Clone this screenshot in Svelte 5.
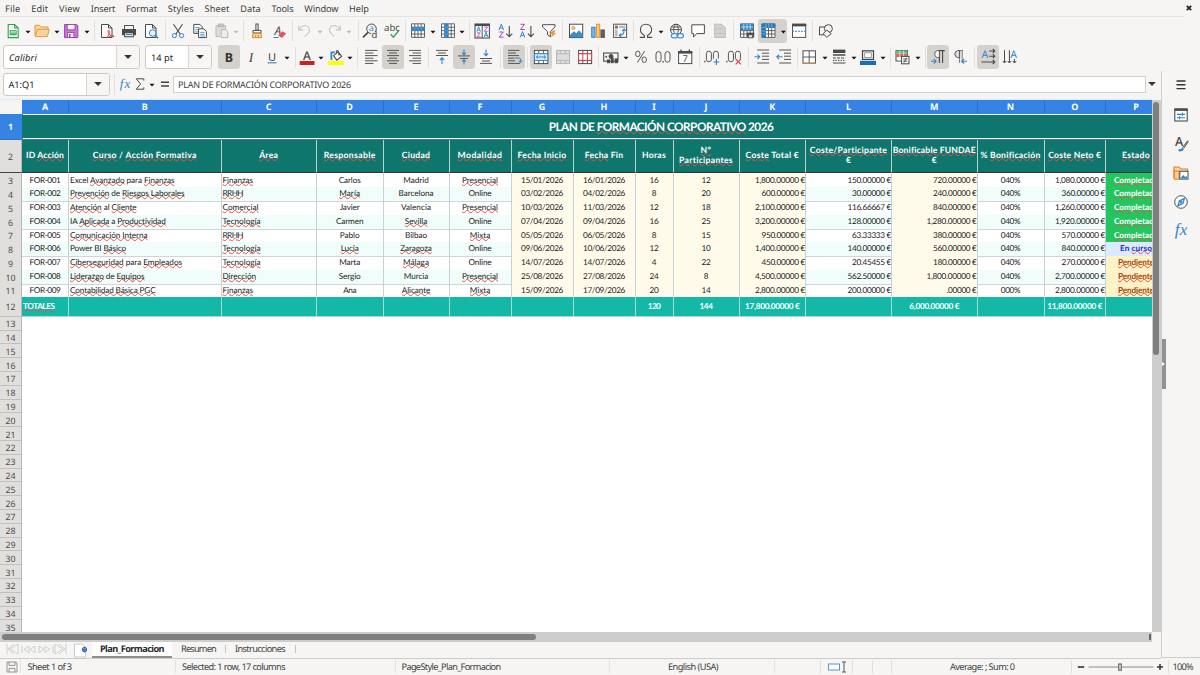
<script>
  const menus = [['File', 15.5], ['Edit', 17], ['View', 21], ['Insert', 24.5], ['Format', 31], ['Styles', 26], ['Sheet', 25], ['Data', 20.5], ['Tools', 22], ['Window', 34], ['Help', 20]];

  const K = '#4b4b4b';
  const B = '#2d87cc';
  const path = (d, c = K, w = 1, f = 'none') => `<path d="${d}" stroke="${c}" stroke-width="${w}" fill="${f}"/>`;
  const rect = (x, y, w, h, f = 'none', s = 'none', sw = 1) => `<rect x="${x}" y="${y}" width="${w}" height="${h}" fill="${f}" stroke="${s}" stroke-width="${sw}"/>`;
  const txt = (x, y, s, size, c = K, extra = '') => `<text x="${x}" y="${y}" font-size="${size}" fill="${c}" font-family="Noto Sans, sans-serif" text-anchor="middle" ${extra}>${s}</text>`;
  const circ = (x, y, r, s = K, f = 'none') => `<circle cx="${x}" cy="${y}" r="${r}" stroke="${s}" fill="${f}"/>`;
  const lines = (y0, y1, step, x, w) => Array.from({ length: Math.round((y1 - y0) / step) + 1 }, (_, i) => `M${x(i)} ${y0 + i * step}h${w(i)}`).join('');
  const page = (c = K, f = '#fdfdfd') => path('M-5.5 -6.5h7l3.5 3.5v9.5h-10.5z M1.5 -6.5v3.5h3.5', c, 1, f);
  const tableGrid = path('M-6.5 -7.2h13v13.6h-13z M-6.5 -3.8h13 M-6.5 -.4h13 M-6.5 3h13 M-3.2 -7v13.4 M0 -7v13.4 M3.2 -7v13.4', '#555', 0.9, '#fff');
  const flow = (d) => path(d, '#555', 1);
  const zeros = (x) => `<rect x="${x}" y="-5.8" width="5" height="10.6" rx="2.5" fill="none" stroke="#555"/><rect x="${x + 7}" y="-5.8" width="5" height="10.6" rx="2.5" fill="none" stroke="#555"/>`;

  const icons = {
    new: path('M-4.8 -6.5h6.5l3.5 3.5v9.6h-10z M1.7 -6.5v3.5h3.5', '#2fa152', 1.1, '#f4fbf5') + rect(-3.3, -1, 7, 5.3, '#43ad60') + path('M-2.5 .3h5.4 M-2.5 1.8h5.4', '#fff', 0.7),
    open: path('M-7 5v-10.7h4.6l1.6 1.7h6.8v3', '#e39a45', 1, '#fbd29a') + path('M-6.6 5.6l2-7.3h11.8l-1.8 7.3z', '#e39a45', 1, '#fbd29a'),
    save: path('M-6.4 -6.5h12l1.2 1.2v11.9h-13.2z', '#9b3fb0', 1, '#c47ad2') + rect(-3.8, -6.4, 7.8, 5.2, '#fff', '#9b3fb0', 0.9) + rect(-3.6, 1.5, 6.5, 5, '#f2f0f2', '#9b3fb0', 0.8) + rect(-2, 2.8, 1.5, 3.4, '#9b3fb0'),
    pdf: page() + path('M-.5 6.5c3-3 3.5-6 2.6-7s-1.5 1-.3 3 3.3 3.2 5.2 3c1-.6-3-1.4-7 1.3', '#e0384a', 1),
    print: rect(-4.5, -5.5, 9, 4, '#e8f3fa', '#555', 1) + rect(-7, -2, 14, 6.2, '#4b4b4b') + rect(-4.3, 1.8, 8.6, 4, '#fff', '#3a3a3a', 1) + path('M-3 3.6h6', B, 1.2),
    preview: page() + circ(1.7, 2, 3.3, B, '#e4f2fb') + path('M4 4.4l3 2.8', B, 1.6),
    cut: path('M-4.5 -6.8l6.8 10 M4.5 -6.8l-6.8 10', K, 1.1) + circ(-3.6, 4.6, 2.1, B) + circ(3.6, 4.6, 2.1, B),
    copy: path('M-6.2 -6.6h6l2.4 2.4v6.6h-8.4z', K, 1, '#fff') + path('M-4.7 -3.5h4 M-4.7 -1.3h4 M-4.7 .9h4', B, 0.8) + path('M-1.4 -2.2h5.2l2.6 2.6v6.2h-7.8z', K, 1, '#fff') + path('M.2 1.4h4.4 M.2 3.3h4.4 M.2 5h4.4', B, 0.8),
    paste: path('M-2 5.6h-4v-11h9.6v4', '#b9b9b9', 1, '#dcdcdc') + rect(-3.6, -7, 4.8, 2.6, '#ccc', '#aaa', 0.8) + path('M-.8 -1.4h4.2l2.4 2.4v5.6h-6.6z', '#b5b5b5', 1, '#eee'),
    brush: rect(-1.1, -7, 2.2, 6.3, '#fff', K, 1) + path('M-4 -.6h8v2.6h-8z', K, 1, '#fff') + path('M-4 2.4h8l.5 4.2h-9z', '#d98c2e', 1, '#fbd29a') + path('M-1.5 4v2.3 M1.3 4v2.3', '#d98c2e', 0.8),
    clear: txt(-1.2, 3.6, 'A', 12, K, 'font-style="italic"') + path('M-5.5 6.5h5', B, 1) + '<path d="M-.8 4.6l4.2-4.4 3.7 2.4-4.2 4.4z" fill="#e8505b"/>',
    undo: path('M-6.3 -5.5v4.4h4.4 M-6 -1.4c2-4.4 7-5.2 9.3-2.6 2.4 2.8 1.6 5-3.6 9.6', '#c4c4c4', 1.1),
    redo: path('M6.3 -5.5v4.4h-4.4 M6 -1.4c-2-4.4-7-5.2-9.3-2.6-2.4 2.8-1.6 5 3.6 9.6', '#c4c4c4', 1.1),
    find: circ(1.5, -2.2, 4.8) + path('M-2 1.4l-5 5', K, 1.8) + txt(1.5, 0.4, 'a', 8.5, B) + '<circle cx="4.2" cy="4.4" r="3.4" fill="#f6f5f4"/>' + txt(4.4, 6.8, 'd', 9.5),
    abc: txt(0, 0.4, 'abc', 9.6, K) + path('M-1.3 3.2l2.7 3 5.2-6.4', '#35a35b', 1.4),
    row: tableGrid + rect(-6.8, -3.9, 13.6, 3.6, '#2d87cc') + path('M-3.2 -3.8v3.4M0 -3.8v3.4M3.2 -3.8v3.4', '#80bce6', 0.5),
    col: tableGrid + rect(-3.3, -7.4, 3.6, 14, '#2d87cc') + path('M-3.2 -3.8h3.4M-3.2 -.4h3.4M-3.2 3h3.4', '#80bce6', 0.5),
    sort: rect(-7, -7, 14.4, 14, '#fff', K, 1.1) + path('M-7 -6h14.4', K, 2) + path('M.2 -5v12', K, 1) + path('M-5.2 .6l1.8-5 1.8 5M-4.6 -1h2.4M2.3 6l1.8-5 1.8 5M2.9 4.4h2.4', B, 0.9) + path('M-5 1.9h3.2l-3.2 4h3.4M2.3 -4h3.2l-3.2 4.3h3.4', '#a848bd', 0.9),
    az: path('M-6 -1l2.3-5.8 2.3 5.8M-5.2 -3h3', B, 1) + path('M-5.7 1h4l-4 5.2h4.3', '#a848bd', 1) + path('M4.3 -5v10.5 M1.3 2.6l3 3 3-3', K, 1.1),
    za: path('M-6.5 -6.7h4l-4 5.2h4.3', '#a848bd', 1) + path('M-6.8 6.4l2.3-5.8 2.3 5.8M-6 4.4h3', B, 1) + path('M3.9 -5v10.5 M.9 2.6l3 3 3-3', K, 1.1),
    filter: path('M-6.4 -6.3h12.4v2.2l-4.7 4.6v5.2l-2.8-2v-3.2l-4.9-4.6z', K, 1, '#fff') + '<path d="M3 0l3.8-1-1.8 3h2.3l-6 5 1.8-3.8h-2.2z" fill="#f0983a"/>',
    image: rect(-6.5, -6.8, 13.2, 13.4, '#fff', K, 1) + circ(-2.6, -3, 1.5, '#e8912e', '#fbd29a') + '<path d="M-6 6.2v-2.5l4-3.4 2.3 2 2.7-3 3.4 3.6v3.3z" fill="#3c8fcb"/>',
    chart: rect(-6.3, -3.7, 3.3, 10, '#7db9e4', B) + rect(-1.6, -6.8, 3.3, 13.1, '#fbc680', '#e8912e') + rect(3, -1, 3.3, 7.3, '#666', K),
    pivot: rect(-6.4, -6.8, 13, 13.2, '#fff', '#555', 1) + rect(-5, -5.4, 3, 3, '#777') + rect(-1, -5.4, 6.4, 2.6, '#bbb') + rect(-5, -1.4, 2.6, 6.6, '#bbb') + path('M-.5 4.3c4 0 4.6-2.4 4.6-5.4 M2 0l2.2-2 1.8 2 M1.3 2.4l-2 2 2 1.6', B, 1.1),
    omega: path('M-6.2 6.4h4.6v-2c-3-1.6-4-3.6-4-5.6 0-3.4 2.4-5.6 5.6-5.6s5.6 2.2 5.6 5.6c0 2-1 4-4 5.6v2h4.6', K, 1.1),
    link: circ(0, -1.4, 5.4) + path('M-5.4 -1.4h10.8 M-4.6 -4h9.2 M0 -6.8c-3.2 3-3.2 7.8 0 10.8 M0 -6.8c3.2 3 3.2 7.8 0 10.8', K, 0.9) + '<rect x="-4.6" y="2.6" width="6.4" height="4.2" rx="2.1" fill="#f6f5f4" stroke="#3b93d3" stroke-width="1.2"/><rect x="1" y="2.6" width="6.4" height="4.2" rx="2.1" fill="none" stroke="#3b93d3" stroke-width="1.2"/>',
    comment: path('M-6.2 -6.2h12.6v8.8h-7.8l-3 3.4v-3.4h-1.8z', K, 1, '#fff'),
    headfoot: path('M-5.3 -6.8h7l3.6 3.6v9.6h-10.6z', '#bbb', 1, '#d2d2d2') + path('M-3.5 -2.4h6 M-3.5 2.6h7', '#bdbdbd', 1),
    printrange: tableGrid + rect(-6.4, -7, 12.8, 6, '#2d87cc') + path('M-6 -4h12 M-3.2 -7v6M0 -7v6M3.2 -7v6', '#dff0fa', 0.7) + rect(-0.2, 1.6, 7.4, 4.2, '#4b4b4b') + rect(1.3, 3.7, 4.4, 3.2, '#cfe4f2', '#4b4b4b', 0.8),
    freeze: '<g transform="translate(-4 0)">' + tableGrid + rect(-6.8, -7.2, 4.2, 14, '#2278bd') + rect(-6.8, -7.2, 13.4, 4, '#2278bd') + path('M-6 -3.5h3 M-6 0h3M-6 3h3 M-2.6 -7v3.6M.4 -7v3.6M3.3 -7v3.6', '#9ccbe9', 0.7) + '</g><path d="M8.4 -.3h5l-2.5 2.8z" fill="#111"/>',
    split: rect(-6.5, -6.8, 13.2, 13.2, '#fff', '#555', 1) + rect(-7, -7.2, 14.2, 2.6, K) + path('M-7 .2h14', B, 1.1).replace('/>', ' stroke-dasharray="2 1"/>'),
    shapes: rect(-6.5, -4, 8, 7.8, '#f6f5f4', K) + circ(2.4, -2.4, 4, K, '#f6f5f4') + path('M.8 -.9l4.4 3.6-4.4 3.6-3.7-3.6z', K, 1, '#f6f5f4'),
    bold: txt(0, 4.8, 'B', 12.5, '#333', 'font-weight="700"'),
    italic: '<text x="0" y="4.6" font-size="13.5" fill="#444" font-family="Liberation Serif, serif" font-style="italic" text-anchor="middle">I</text>',
    under: txt(0, 3.6, 'U', 11, '#444') + path('M-4.5 5.8h9', B, 1.1),
    fontcolor: txt(0, 2.8, 'A', 12, '#444', 'font-weight="500"') + rect(-7.3, 4, 14.8, 4, '#c9211e'),
    fill: path('M-4.6 3v-7.6h3.4', B, 1.8) + path('M-2.4 -1.4l4.6-3.7 3.4 4.5-4.8 3.8z M.4 -4.4c-.6-2.8 2-2.8 2.4 0v2.6', K, 1.1, '#fff') + rect(-8, 4, 16, 4, '#ffff00'),
    left: flow(lines(-6.6, 6.4, 2.6, () => -6, (i) => (i % 2 ? 8.5 : 12.5))),
    center: flow(lines(-6.6, 6.4, 2.6, (i) => (i % 2 ? -4 : -6), (i) => (i % 2 ? 8 : 12))),
    right: flow(lines(-6.6, 6.4, 2.6, (i) => (i % 2 ? -2.5 : -6), (i) => (i % 2 ? 8.5 : 12))),
    top: flow('M-6 -6.6h12 M-4 -4h8 M-6 -1.5h12') + path('M0 7v-6 M-2.2 3l2.2-2.2 2.2 2.2', B, 1.1),
    middle: flow('M-6 -1.1h12 M-4 1.4h8') + path('M0 -7.5v5 M-2 -4.4l2 2 2-2 M0 7.5v-5 M-2 4.6l2-2 2 2', B, 1.1),
    bottom: flow('M-6 1.5h12 M-4 4h8 M-6 6.4h12') + path('M0 -7.5v6 M-2.2 -3.6l2.2 2.2 2.2-2.2', B, 1.1),
    wrap: flow('M-6 -6.6h11.5 M-6 -4h8 M-6 -1.4h11 M-6 1.2h6.5 M-6 3.8h7 M-6 6.4h12') + path('M1 1h4q1.6 0 1.6 2v1.8 M4.6 3.6l2 2 1.6-2', B, 1),
    merge: rect(-6.6, -6.6, 13.4, 13.2, '#fff', K) + path('M-6.6 -3.2h13.4 M-6.6 3.4h13.4 M-2.2 -6.6v3.4 M2.4 -6.6v3.4 M-2.2 3.4v3.2 M2.4 3.4v3.2', K, 0.9) + rect(-6.6, -3.2, 13.4, 6.6, '#d7ebf8', B, 0.9) + path('M-4.5 0h9 M-3 -1.6l-1.7 1.6 1.7 1.6 M3 -1.6l1.7 1.6-1.7 1.6', B, 1),
    mergegrey: rect(-6.4, -6.6, 13, 13.2, '#ddd', '#b4b4b4') + path('M-6.4 -3.2h13 M-6.4 3.4h13 M-2.2 -6.6v3.4 M2.4 -6.6v3.4 M-2.2 3.4v3.2 M2.4 3.4v3.2', '#b4b4b4', 0.9),
    unmerge: rect(-6.4, -6.6, 13, 13.2, '#fff', K) + path('M-6.4 -3.2h13 M-6.4 3.6h13 M-2.2 -6.6v13 M2.4 -6.6v13', K, 0.9) + rect(-6.4, -3.2, 13, 6.6, '#fff', '#de3b44', 1) + path('M-2.2 -3v6.4 M2.4 -3v6.4', '#de3b44', 1),
    currency: rect(-7.3, -4, 14.3, 8.2, '#f6f5f4', K, 1.1) + circ(0, -0.6, 2, K, K) + '<g fill="#4b4b4b"><circle cx="-4.8" cy="-.2" r="1"/><rect x="-4" y="2.4" width="3" height="3.8"/><rect x="-.3" y=".8" width="3" height="5.4"/><rect x="3.6" y="1.4" width="3.4" height="4.8"/></g>',
    percent: path('M3.6 -6l-7.2 11.6', '#555', 1) + '<rect x="-5.3" y="-5.8" width="4.2" height="5.4" rx="2" fill="none" stroke="#555"/><rect x="1.1" y="0" width="4.2" height="5.4" rx="2" fill="none" stroke="#555"/>',
    number: '<rect x="-7" y="-5.4" width="5" height="10.6" rx="2.5" fill="none" stroke="#555"/><rect x="2" y="-5.4" width="5" height="10.6" rx="2.5" fill="none" stroke="#555"/>' + rect(-0.6, 4, 1.3, 1.6, '#555'),
    date: rect(-6.4, -5.4, 13.2, 12, '#fff', K, 1) + rect(-6.8, -6, 14, 2.6, K) + path('M-4 -7.5v2 M4.3 -7.5v2', K, 1.3) + txt(0.2, 5.2, '7', 9.5, K),
    adddec: zeros(-5.6) + rect(-7.8, 3.8, 1.3, 1.6, '#555') + rect(1, 1.6, 7, 6, '#f6f5f4') + path('M1.4 5h6 M4.4 2v6', B, 1.2),
    deldec: zeros(-5.6) + rect(-7.8, 3.8, 1.3, 1.6, '#555') + rect(1, 1.6, 7, 6, '#f6f5f4') + path('M1.6 1.9l5.4 5.4 M7 1.9l-5.4 5.4', '#e0384a', 1.2),
    indent: flow('M-4.8 -7h12 M0 -3.8h7 M0 -.8h7 M0 2.4h7 M-4.8 6h12') + path('M-7.5 -.2h5 M-4.5 -2.4l2.2 2.2-2.2 2.2', B, 1.1),
    outdent: flow('M-4.8 -7h12 M0 -3.8h7 M0 -.8h7 M0 2.4h7 M-4.8 6h12') + path('M-7.5 -.2h6 M-5 -2.4l-2.2 2.2 2.2 2.2', B, 1.1),
    borders: rect(-6, -6.2, 12.4, 12.4, '#fff', K, 1) + path('M.2 -6v12 M-6 0h12.4', K, 0.9) + path('M-6.3 6.2h13', '#e8912e', 0.8),
    linestyle: rect(-6, -7.4, 12.4, 3.4, K) + path('M-6 -2h12.4', K, 1.5) + path('M-6 1h12.4', K, 1.1).replace('/>', ' stroke-dasharray="3 1"/>') + path('M-6 3.4h12.4', K, 1).replace('/>', ' stroke-dasharray="1.5 1"/>') + path('M-6 6h12.4', K, 1),
    linecolor: rect(-5.5, -6.2, 11, 8.6, '#e8f3fa', '#444', 1.2) + rect(-3.3, -4.2, 6.6, 4.6, '#fff', '#777', 0.7) + rect(-8, 3.8, 16, 4.2, '#1b6cb0'),
    cond: rect(-6, -6.5, 11.5, 10.5, '#fff', K, 1) + rect(-6, -6.5, 11.5, 3.2, '#5fc27c') + rect(-6, -3.2, 11.5, 3.2, '#e8655c') + path('M-2.2 -6.5v10.5 M1.6 -6.5v10.5', '#fff', 0.6) + rect(-0.4, -0.6, 7.4, 7.4, '#fff', K, 1) + path('M1.2 2h4.2M1.2 4.2h4.2M4.6 .6l-2.6 5', K, 0.9),
    ltr: path('M4.6 6v-12.2 M1.4 6v-12.2 M-.2 -6.4h7', K, 1.1) + '<path d="M1.4 -6.4h-2a3.6 3.6 0 0 0 0 7h2z" fill="#fff" stroke="#4b4b4b" stroke-width=".9"/>' + path('M-7 4.2h5 M-4.2 1.8l2.3 2.4-2.3 2.4', B, 1.1),
    rtl: path('M2.2 6v-12.2 M-.4 6v-12.2 M-2 -6.4h5', '#777', 1) + '<path d="M-.4 -6.4h-2a3.6 3.6 0 0 0 0 7h2z" fill="#ddd" stroke="#4b4b4b" stroke-width=".9"/>' + path('M7 4.2h-5 M4.2 1.8l-2.3 2.4 2.3 2.4', B, 1.1),
    texth: txt(-3.2, 1, 'A', 10.5, B) + path('M1.2 -6h5.5 M4.8 -8l2 2-2 2 M1.2 -.8h5.5 M4.8 -2.8l2 2-2 2 M-6.5 5h13.2 M4.8 3l2 2-2 2', K, 1.1),
    textv: txt(3.6, 1, 'A', 10.5, B) + path('M-5.5 -6.8v12.6 M-7.2 4l1.7 2 1.7-2 M-.6 -6.8v12.6 M-2.3 4l1.7 2 1.7-2 M4.4 2v4 M2.8 4l1.7 2 1.7-2', K, 1),
    fx: '<text x="0" y="3.8" font-size="13" fill="#2d87cc" font-family="Liberation Serif, serif" font-style="italic" text-anchor="middle" textLength="10.5">fx</text>',
    fxbig: '<text x="0" y="4.4" font-size="17" fill="#2d87cc" font-family="Liberation Serif, serif" font-style="italic" text-anchor="middle" textLength="12.5">fx</text>',
    sigma: path('M3.8 -3.4v-1.8h-7.6l4.4 5.2-4.4 5.2h7.6v-1.8', K, 1),
    equals: path('M-4 -1.7h8 M-4 2h8', '#444', 1.5),
    hamburger: path('M-4.5 -4h9 M-4.5 -.2h9 M-4.5 3.6h9', '#333', 1.4),
    props: rect(-6.2, -6, 12.4, 12, '#fff', K, 1.1) + rect(-6.5, -6.5, 13, 2.4, K) + path('M-4 -.6h8 M-4 2.8h8 M1.4 -2.2v3 M-1.4 1.3v3', B, 1.1),
    stylesicon: txt(-1.8, 2, 'A', 12.5, '#444', 'font-weight="500"') + path('M6.8 -3.5l-5.2 7.2 M7.4 -2.6l-4.6 6.8', K, 1) + path('M-2.4 5.8q3 1.4 4.6-1.4', B, 2.2),
    gallery: path('M-7 5v-11h5l1.6 2h6.8v3', '#e07f24', 1.2, '#fbd9ae') + rect(-6.8, -2, 5, 8.2, '#fbc98c', '#e07f24') + rect(-1.2, -1.7, 8.2, 7.8, '#fff', K, 1) + '<path d="M-.8 5.6l3-3.6 2 2 1.2-1 1.2 2.6z" fill="#2d87cc"/>',
    compass: circ(0, 0, 6.3, '#555', '#fbfbfb') + path('M3.4 -3.6l-1.4 5-5.2 2.6 1.5-5z', B, 1.2, '#bcdcf2') + circ(0, 0, 0.8, B, B),
    saved: path('M-5 -5h9l1 1v9h-10z M-3 -5v3.4h6v-3.4 M-3 5v-3.6h6v3.6', '#8c8c8c', 0.9),
    selmode: rect(-5.5, -3, 11, 6, '#fff', '#4b9bd0', 1),
    ibeam: path('M-2 -5h4 M0 -5v10 M-2 5h4', '#555', 1),
    minus: path('M-3.2 0h6.4', '#333', 1.6),
    plus: path('M-3 0h6 M0 -3v6', '#333', 1.5),
    slider: path('M-32.5 0h65', '#8d8d8d', 1) + rect(-2.2, -3, 2.4, 6.2, '#f6f5f4', '#4a4a4a', 1),
    arrow: '<path d="M-2.5 -.3h5l-2.5 2.8z" fill="#111"/>',
    arrowoff: '<path d="M-2.5 -.3h5l-2.5 2.8z" fill="#bbb"/>',
    arrowbig: '<path d="M-3.8 -2h7.6l-3.8 4z" fill="#333"/>'
  };

  const place = (list, start = 0) => {
    let end = start;
    return list.map(([name, cx, opt]) => {
      const w = name === 'sep' ? 1 : name.startsWith('arrow') ? 8 : name === 'freeze' ? 29 : name === 'slider' ? 66 : opt === 'on' ? 22 : name === 'ibeam' || name === 'minus' || name === 'plus' ? 8 : 16;
      const gap = cx - w / 2 - end;
      end = cx + w / 2;
      return { name, w, gap, on: opt === 'on' || name === 'freeze' };
    });
  };

  const bar1 = place([['new', 12.5], ['arrow', 27.5], ['open', 42], ['arrow', 57], ['save', 71], ['arrow', 86.5], ['sep', 94], ['pdf', 107], ['print', 129], ['preview', 151], ['sep', 165], ['cut', 178], ['copy', 200], ['paste', 222], ['arrowoff', 236], ['sep', 243], ['brush', 256.5], ['clear', 278.5], ['sep', 292], ['undo', 305], ['arrowoff', 319.5], ['redo', 334], ['arrowoff', 349], ['sep', 358], ['find', 370], ['abc', 391.5], ['sep', 405], ['row', 418], ['arrow', 432.5], ['col', 447.5], ['arrow', 462], ['sep', 469.5], ['sort', 482], ['az', 504.5], ['za', 527], ['filter', 549], ['sep', 562.5], ['image', 576], ['chart', 598], ['pivot', 619.5], ['sep', 633.5], ['omega', 645.5], ['arrow', 660.5], ['link', 676], ['comment', 698], ['headfoot', 720], ['sep', 733.5], ['printrange', 747], ['freeze', 772.5], ['split', 798.5], ['sep', 812.5], ['shapes', 826]]);
  const bar2 = place([['bold', 228.5, 'on'], ['italic', 251], ['under', 272], ['arrow', 287], ['sep', 295], ['fontcolor', 306.8], ['arrow', 321.5], ['fill', 336], ['arrow', 350.5], ['sep', 358], ['left', 371.5], ['center', 393.5, 'on'], ['right', 415.5], ['sep', 429], ['top', 442.5], ['middle', 464.5, 'on'], ['bottom', 486.5], ['sep', 500.5], ['wrap', 514, 'on'], ['sep', 527.5], ['merge', 541, 'on'], ['mergegrey', 563], ['unmerge', 585], ['sep', 599], ['currency', 611], ['arrow', 626], ['percent', 641.5], ['number', 663.5], ['date', 685.3], ['sep', 699.5], ['adddec', 712.5], ['deldec', 734.5], ['sep', 748.5], ['indent', 762.5], ['outdent', 784], ['sep', 797.5], ['borders', 809.5], ['arrow', 825], ['linestyle', 839], ['arrow', 854], ['linecolor', 868.5], ['arrow', 883.5], ['sep', 891], ['cond', 902.5], ['arrow', 918], ['sep', 926], ['ltr', 938.5, 'on'], ['rtl', 960.5], ['sep', 974.5], ['texth', 988, 'on'], ['textv', 1010]], 212);
  const bar3 = place([['sep', 114], ['fx', 124.5], ['sigma', 140], ['arrow', 152], ['equals', 165]], 109.5);
  const statusA = place([['sep', 820.5], ['selmode', 833.5], ['ibeam', 844], ['sep', 852], ['sep', 872], ['sep', 891.5]], 775);
  const statusB = place([['sep', 1071.5], ['minus', 1081], ['slider', 1120.5], ['plus', 1159.5], ['sep', 1168]], 1071);

  const letters = 'ABCDEFGHIJKLMNOP'.split('');
  const heads = [
    [['ID ~Acción~', 38]], [['~Curso~ / ~Acción Formativa~', 104]], [['~Área~', 19]], [['~Responsable~', 52]], [['~Ciudad~', 28.5]], [['~Modalidad~', 45]],
    [['~Fecha Inicio~', 49]], [['~Fecha~ Fin', 38.5]], [['Horas', 24]], [['~Nº~', 11], ['~Participantes~', 54]], [['~Coste~ Total €', 53.5]],
    [['~Coste/Participante~', 77.5], ['€', 5]], [['~Bonificable FUNDAE~', 83], ['€', 5]], [['% ~Bonificación~', 60]], [['~Coste Neto~ €', 53]], [['~Estado~', 28]]
  ];
  const W = { Carlos: 22, '~María~': 21, Javier: 20, Carmen: 27.5, Pablo: 20, '~Lucía~': 18, Marta: 21, Sergio: 22, Ana: 13, Madrid: 25.5, Barcelona: 35, Valencia: 30, '~Sevilla~': 22.5, Bilbao: 22, '~Zaragoza~': 31.5, '~Málaga~': 26, Murcia: 24.5, '~Alicante~': 28.5, '~Presencial~': 36, Online: 23, '~Mixta~': 20.5, '~Finanzas~': 30.5, '~RRHH~': 20.5, '~Comercial~': 36, '~Tecnología~': 38, '~Dirección~': 33.5, '~Completada~': 44, 'En ~curso~': 32, '~Pendiente~': 36 };
  const courseW = [104.5, 114.5, 66.5, 96, 77.5, 56, 112, 74.5, 85.5];
  const rows = [
    ['Excel ~Avanzado~ para ~Finanzas~', '~Finanzas~', 'Carlos', 'Madrid', '~Presencial~', '15/01/2026', '16/01/2026', '16', '12', '1,800.00000 €', '150.00000 €', '720.00000 €', '040%', '1,080.00000 €', '~Completada~'],
    ['~Prevención~ de ~Riesgos Laborales~', '~RRHH~', '~María~', 'Barcelona', 'Online', '03/02/2026', '04/02/2026', '8', '20', '600.00000 €', '30.00000 €', '240.00000 €', '040%', '360.00000 €', '~Completada~'],
    ['~Atención~ al ~Cliente~', '~Comercial~', 'Javier', 'Valencia', '~Presencial~', '10/03/2026', '11/03/2026', '12', '18', '2,100.00000 €', '116.66667 €', '840.00000 €', '040%', '1,260.00000 €', '~Completada~'],
    ['IA ~Aplicada~ a ~Productividad~', '~Tecnología~', 'Carmen', '~Sevilla~', 'Online', '07/04/2026', '09/04/2026', '16', '25', '3,200.00000 €', '128.00000 €', '1,280.00000 €', '040%', '1,920.00000 €', '~Completada~'],
    ['~Comunicación Interna~', '~RRHH~', 'Pablo', 'Bilbao', '~Mixta~', '05/05/2026', '06/05/2026', '8', '15', '950.00000 €', '63.33333 €', '380.00000 €', '040%', '570.00000 €', '~Completada~'],
    ['Power BI ~Básico~', '~Tecnología~', '~Lucía~', '~Zaragoza~', 'Online', '09/06/2026', '10/06/2026', '12', '10', '1,400.00000 €', '140.00000 €', '560.00000 €', '040%', '840.00000 €', 'En ~curso~'],
    ['~Ciberseguridad~ para ~Empleados~', '~Tecnología~', 'Marta', '~Málaga~', 'Online', '14/07/2026', '14/07/2026', '4', '22', '450.00000 €', '20.45455 €', '180.00000 €', '040%', '270.00000 €', '~Pendiente~'],
    ['~Liderazgo~ de ~Equipos~', '~Dirección~', 'Sergio', 'Murcia', '~Presencial~', '25/08/2026', '27/08/2026', '24', '8', '4,500.00000 €', '562.50000 €', '1,800.00000 €', '040%', '2,700.00000 €', '~Pendiente~'],
    ['~Contabilidad Básica PGC~', '~Finanzas~', 'Ana', '~Alicante~', '~Mixta~', '15/09/2026', '17/09/2026', '20', '14', '2,800.00000 €', '200.00000 €', '.00000 €', '000%', '2,800.00000 €', '~Pendiente~']
  ].map((r, i) => ['FOR-00' + (i + 1), ...r]);
  const money = { 8: 30, 10: 39, 11: 43.5, 13: 50 };
  const cellWidth = (c, i, v) => {
    if (c === 0) return 31;
    if (c === 1) return courseW[i];
    if (c === 6 || c === 7) return 42;
    if (c === 8 || c === 9) return v.length * 4.5;
    if (c === 13) return 19.5;
    if (v.includes('€')) return money[v.length];
    return W[v];
  };
  const totals = [['~TOTALES~', 31.5], null, null, null, null, null, null, null, ['120', 12.5], ['144', 13], ['17,800.00000 €', 54.5], null, ['6,000.00000 €', 50], null, ['11,800.00000 €', 55], null];
  const tint = (c, v) => {
    if (c === 15) return v.includes('Comp') ? 'done' : v.includes('curso') ? 'doing' : 'pending';
    return (c >= 6 && c <= 10) || c === 12 ? 'cream' : '';
  };
  const emptyRows = Array.from({ length: 23 }, (_, i) => i + 13);

  function fit(node, width) {
    const natural = node.getBoundingClientRect().width;
    node.style.letterSpacing = (width - natural) / node.textContent.length + 'px';
  }
</script>

{#snippet label(text, w)}<span class="fit" use:fit={w}>{#each text.split('~') as part, i}{#if i % 2}<span class="typo">{part}</span>{:else}{part}{/if}{/each}</span>{/snippet}

{#snippet icon(name, w = 20, h = 24)}<svg width={w} height={h} viewBox="{-w / 2} {-h / 2} {w} {h}">{@html icons[name]}</svg>{/snippet}

{#snippet tools(list)}
  {#each list as it}
    {#if it.name === 'sep'}
      <i class="sep" style="margin-left:{it.gap}px"></i>
    {:else}
      <span class="tool" class:on={it.on} style="margin-left:{it.gap}px;width:{it.w}px">{@render icon(it.name, it.w)}</span>
    {/if}
  {/each}
{/snippet}

<div class="window">
  <nav class="menubar">
    {#each menus as [m, w]}{@render label(m, w)}{/each}
    <svg class="close" width="6" height="6" viewBox="0 0 6 6"><path d="M.8 .8l4.4 4.4M5.2 .8L.8 5.2" stroke="#222" stroke-width="1.7" /></svg>
  </nav>
  <div class="bar">{@render tools(bar1)}</div>
  <div class="bar format">
    <div class="combo font"><em>{@render label('Calibri', 28)}</em><b>{@render icon('arrowbig', 12)}</b></div>
    <div class="combo size"><span>{@render label('14 pt', 22)}</span><b>{@render icon('arrowbig', 12)}</b></div>
    {@render tools(bar2)}
  </div>

  <div class="work">
    <main>
      <div class="bar formula">
        <div class="combo name"><span>{@render label('A1:Q1', 26)}</span><b>{@render icon('arrowbig', 12)}</b></div>
        {@render tools(bar3)}
        <div class="input">{@render label('PLAN DE FORMACIÓN CORPORATIVO 2026', 173)}</div>
        <span class="expand">{@render icon('arrowbig', 12)}</span>
      </div>
      <div class="sheetwrap">
        <div class="sheet">
          <div class="row colhead"><div class="corner"></div>{#each letters as l}<div>{l}</div>{/each}</div>
          <div class="titlerow"><div class="rh sel">1</div><div class="title">{@render label('PLAN DE ~FORMACIÓN CORPORATIVO~ 2026', 224.5)}</div></div>
          <div class="row heads"><div class="rh">2</div>{#each heads as h}<div class="cell">{#each h as [t, w]}{@render label(t, w)}{/each}</div>{/each}</div>
          {#each rows as r, i}
            <div class="row data" class:alt={i % 2}>
              <div class="rh">{i + 3}</div>
              {#each r as v, c}
                <div class="cell {tint(c, v)}" class:l={c === 1 || c === 2} class:r={v.includes('€')}>{@render label(v, cellWidth(c, i, v))}</div>
              {/each}
            </div>
          {/each}
          <div class="row totals"><div class="rh">12</div>{#each totals as t, c}<div class="cell" class:l={c === 0}>{#if t}{@render label(t[0], t[1])}{/if}</div>{/each}</div>
          {#each emptyRows as n}<div class="blank"><div class="rh">{n}</div></div>{/each}
        </div>
        <div class="vscroll"><div></div></div>
      </div>
      <div class="hscroll"><div></div><i></i></div>
      <div class="tabs">
        <svg class="nav" width="62" height="14" viewBox="0 0 62 14" fill="none" stroke="#cfcfcf">
          <path d="M1 1.5v11M12 2L4 7l8 5zM16 4v7M23 4l-5 3.3 5 3.4zM29 4l-5 3.3 5 3.4zM33 4l5 3.3-5 3.4zM39 4l5 3.3-5 3.4zM47 4v7M49 2l8 5-8 5zM60 1.5v11M8 2L2 7l6 5M53 2l6 5-6 5" />
        </svg>
        <svg class="add" width="14" height="16" viewBox="0 0 14 16"><path d="M.5 2h8l3 3v10H.5z" fill="#fff" stroke="#ccc" /><circle cx="10.5" cy="7.5" r="2" fill="#cfe0f7" stroke="#2a5db0" stroke-width="1.1" /><path d="M10.5 4.5v6M8 7.5h5" stroke="#2a5db0" stroke-width=".7" /></svg>
        <div class="tab active">{@render label('Plan_Formacion', 64)}</div>
        <div class="tab">{@render label('Resumen', 35)}</div>
        <i></i>
        <div class="tab last">{@render label('Instrucciones', 50)}</div>
        <i></i>
      </div>
    </main>
    <aside>
      {#each ['hamburger', 'props', 'stylesicon', 'gallery', 'compass', 'fxbig'] as n}<span>{@render icon(n, 20, 20)}</span>{/each}
      <div class="grip"></div>
    </aside>
  </div>

  <footer>
    <div class="s0">{@render icon('saved', 14, 14)}</div>
    <div class="s1">{@render label('Sheet 1 of 3', 44)}</div>
    <div class="s2">{@render label('Selected: 1 row, 17 columns', 103)}</div>
    <div class="s3">{@render label('PageStyle_Plan_Formacion', 99)}</div>
    <div class="s4">{@render label('English (USA)', 50)}</div>
    <div class="s5">{@render tools(statusA)}</div>
    <div class="s6">{@render label('Average: ; Sum: 0', 64.5)}</div>
    <div class="s7">{@render tools(statusB)}</div>
    <div class="s8">{@render label('100%', 20.5)}</div>
  </footer>
</div>

<style>
  :global(body) { background: #f6f5f4; }
  .window { width: 1200px; height: 675px; overflow: hidden; display: flex; flex-direction: column; background: #f6f5f4; font: 9.2px 'Noto Sans', sans-serif; color: #404040; text-rendering: geometricPrecision; }
  .window :global(svg) { display: block; flex: none; overflow: visible; }
  .fit { white-space: pre; display: inline-block; }
  .typo { text-decoration: underline wavy #e8504a 0.5px; text-underline-offset: -1px; text-decoration-skip-ink: none; }
  .menubar { box-sizing: border-box; height: 17px; flex: none; margin-right: 16px; padding-left: 5px; display: flex; align-items: center; gap: 10.75px; border-bottom: 1px solid #e6e4e2; }
  .close { margin-left: auto; margin-right: -8px; }
  .bar { height: 27px; flex: none; display: flex; align-items: center; }
  .format { box-sizing: border-box; padding-bottom: 1px; }
  .sep { flex: none; width: 1px; height: 21px; background: #e2e0de; }
  .tool { flex: none; height: 24px; border-radius: 3px; }
  .on { background: #d5d1cd; }
  .combo { box-sizing: border-box; flex: none; height: 24px; display: flex; background: #fff; border: 1px solid #cdc9c5; border-radius: 3px; overflow: hidden; color: #222; align-items: center; }
  .combo > b { box-sizing: border-box; width: 23px; height: 100%; margin-left: auto; padding-left: 5px; border-left: 1px solid #d9d6d3; background: #f7f6f5; display: flex; align-items: center; }
  .combo > em, .combo > span { padding-left: 5px; }
  .font { width: 137px; margin-left: 3px; }
  .size { width: 67px; margin: 0 0 0 5px; }
  .name { width: 107px; height: 23px; margin-left: 2.5px; }
  .work { flex: none; height: 587px; display: flex; }
  main { width: 1161px; flex: none; display: flex; flex-direction: column; }
  .formula { box-sizing: border-box; height: 27px; padding-bottom: 1px; }
  .input { box-sizing: border-box; width: 973px; height: 17px; background: #fff; border: 1px solid #d2cfcc; padding-left: 4px; display: flex; align-items: center; font-size: 9px; flex: none; }
  .expand { flex: none; }
  .sheetwrap { margin-top: 2px; height: 532px; display: flex; flex: none; }
  .sheet { width: 1152px; height: 532px; overflow: hidden; background: #fff; box-shadow: 0 -1px #d8ebf8; }
  .row { display: grid; grid-template-columns: 22px 47px 152.5px 95.25px 66.75px 66px 62px 62px 62px 38px 66px 66.5px 86px 85.5px 67px 61.5px 61px; width: 1167px; }
  .colhead { height: 14px; margin-bottom: 1px; }
  .colhead > div { box-sizing: border-box; background: #3584e4; border-right: 1px solid #2c70c6; color: #fff; font-weight: 700; font-size: 9px; line-height: 14px; text-align: center; }
  .colhead .corner { background: #f6f5f4; border: 0; }
  .rh { box-sizing: border-box; width: 22px; flex: none; background: #e1dfde; border-right: 1px solid #b9b7b5; border-bottom: 1px solid #c3c1bf; color: #4c4c4c; font-size: 8.8px; display: flex; align-items: center; justify-content: center; padding-top: 2px; }
  .titlerow { height: 23px; display: flex; margin-bottom: 2px; }
  .rh.sel { background: #3584e4; color: #fff; font-weight: 700; border-color: #3584e4; box-shadow: 0 0 0 1px #3584e4; }
  .title { width: 1278px; flex: none; display: flex; justify-content: center; align-items: center; background: #0f766e; color: #fff; font: 700 11.8px Lato, sans-serif; }
  .cell { box-sizing: border-box; min-width: 0; display: flex; align-items: center; justify-content: center; border-right: 1px solid #c9d1d5; border-bottom: 1px solid #d0d5da; font-family: Lato, sans-serif; font-size: 8.2px; color: #1a1a1a; white-space: nowrap; line-height: 10px; }
  .heads { height: 33.3px; box-shadow: 0 -1px #3c78b5; }
  .heads .cell { flex-direction: column; background: #0f766e; color: #fff; font-weight: 700; font-size: 8.6px; border-color: #b8d2cf; border-bottom: 1px solid #333; padding-bottom: 2px; }
  .heads .rh { border-bottom-color: #444; }
  .data { height: 13.78px; }
  .data .cell { padding-bottom: 1.5px; }
  .data .fit { height: 10px; }
  .alt .cell { background: #f0fdfa; }
  .data .cream { background: #fffbeb; }
  .data .l, .totals .l { justify-content: flex-start; padding-left: 1px; }
  .data .r { justify-content: flex-end; padding-right: 0; }
  .data .done { background: #22c55e; color: #fff; font-weight: 700; border-bottom-color: #52c97e; }
  .data .doing { background: #dbeafe; color: #1d2fc4; font-weight: 700; }
  .data .pending { background: #fef3c7; color: #a9430c; font-weight: 700; border-bottom-color: #eadfb4; }
  .totals { height: 19.6px; }
  .totals .cell { background: #14b8a6; color: #fff; font-weight: 700; border-color: #a7dcd5; }
  .blank { height: 13.8px; display: flex; }
  .vscroll { width: 9px; background: #cdcdcd; padding: 2px 2px 0 1px; box-sizing: border-box; }
  .vscroll div { height: 253px; background: #7f7f7f; border-radius: 3px; }
  .hscroll { height: 10px; width: 1152px; box-sizing: border-box; flex: none; background: #cdcdcd; padding: 2px 1px 2px 2px; display: flex; justify-content: space-between; }
  .hscroll div { width: 534px; height: 6px; background: #7f7f7f; border-radius: 3px; }
  .hscroll i { width: 2px; background: #666; }
  .tabs { flex: 1; display: flex; align-items: flex-start; border-bottom: 1px solid #cfcdcb; }
  .nav { margin: 0 0 0 6px; }
  .add { margin-left: 6px; }
  .tab { height: 14px; line-height: 14px; padding: 0 9px; }
  .tab.active { margin-left: 4px; width: 80px; box-sizing: border-box; padding: 0 0 0 8px; background: #fff; border-bottom: 2px solid #8f8f8f; height: 16px; font-weight: 700; color: #2a2a2a; }
  .tab.last { padding: 0 10px 0 9px; }
  .tabs i { width: 1px; height: 8px; margin-top: 3px; background: #c4c2c0; }
  aside { box-sizing: border-box; width: 39px; border-left: 1px solid #cfcdcb; border-bottom: 1px solid #cfcdcb; display: flex; flex-direction: column; align-items: center; gap: 9.1px; padding-top: 4px; }
  aside > span:first-child { margin-bottom: 1px; }
  .grip { align-self: flex-start; width: 4px; height: 50px; margin-top: 88px; background: #8f9292; display: flex; align-items: center; }
  .grip::before { content: ''; border: 2px solid transparent; border-left: 3px solid #fff; border-right: 0; }
  footer { flex: none; height: 17px; display: flex; align-items: center; }
  footer > div { box-sizing: border-box; height: 13px; flex: none; display: flex; align-items: center; }
  footer .tool { display: flex; align-items: center; }
  footer .sep { height: 13px; }
  .s0 { width: 21px; padding-left: 5px; border-right: 1px solid #e4e2e0; }
  .s1 { width: 155px; padding-left: 6.5px; border-right: 1px solid #e4e2e0; }
  .s2 { width: 220px; padding-left: 6px; border-right: 1px solid #e4e2e0; }
  .s3 { width: 214px; padding-left: 5.5px; border-right: 1px solid #e4e2e0; }
  .s4 { width: 165px; padding-left: 58px; border-right: 1px solid #e4e2e0; }
  .s5 { width: 117px; }
  .s6 { width: 179px; padding-left: 58px; }
  .s7 { width: 97.5px; }
  .s8 { padding-left: 4px; }
</style>
